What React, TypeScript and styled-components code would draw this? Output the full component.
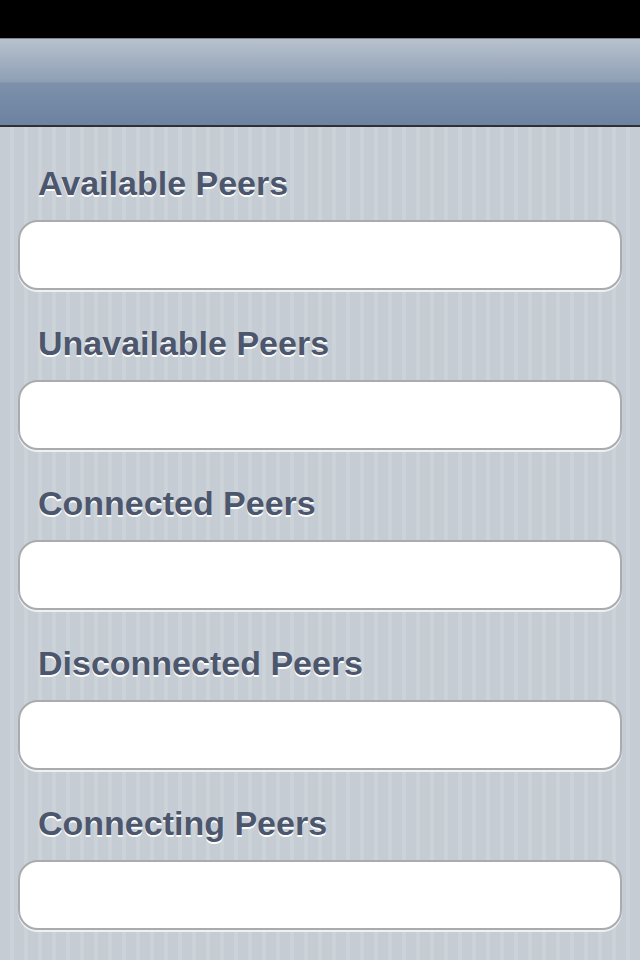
import React from 'react';
import styled, { createGlobalStyle } from 'styled-components';

const sections = [
  'Available Peers',
  'Unavailable Peers',
  'Connected Peers',
  'Disconnected Peers',
  'Connecting Peers',
];

const App = () => {
  return (
    <>
      <GlobalStyle />
      <Screen>
        <StatusBar />
        <NavBar />
        <TableArea>
          {sections.map((title) => (
            <Section key={title}>
              <SectionTitle>{title}</SectionTitle>
              <GroupCell />
            </Section>
          ))}
        </TableArea>
      </Screen>
    </>
  );
};

export default App;

// Styled Components
const GlobalStyle = createGlobalStyle`
  html, body {
    margin: 0;
    padding: 0;
    background: #000;
  }
  body {
    font-family: "Liberation Sans", Arial, Helvetica, sans-serif;
  }
`;

const Screen = styled.div`
  width: 640px;
  height: 960px;
  display: flex;
  flex-direction: column;
  overflow: hidden;
`;

const StatusBar = styled.div`
  height: 38px;
  flex-shrink: 0;
  background: #000;
`;

const NavBar = styled.div`
  height: 86px;
  flex-shrink: 0;
  border-top: 1px solid #80868d;
  border-bottom: 2px solid #2d3034;
  background: linear-gradient(
    to bottom,
    #b8c2cd 0%,
    #a8b5c4 18%,
    #8e9fb5 50%,
    #7d90ab 51%,
    #6c83a1 100%
  );
`;

const TableArea = styled.div`
  flex: 1;
  padding: 3px 18px 0;
  background-color: #c5ccd4;
  background-image: repeating-linear-gradient(
    to right,
    #c5ccd4 0px,
    #c5ccd4 10px,
    #cbd2d8 10px,
    #cbd2d8 14px
  );
  display: flex;
  flex-direction: column;
`;

const Section = styled.div`
  display: flex;
  flex-direction: column;
  flex-shrink: 0;
  height: 160px;
`;

const SectionTitle = styled.h2`
  margin: 0;
  padding: 33px 0 0 20px;
  height: 90px;
  box-sizing: border-box;
  font-size: 34px;
  line-height: 40px;
  font-weight: bold;
  color: #4c566c;
  text-shadow: 0 2px 0 #ffffff;
  white-space: nowrap;
`;

const GroupCell = styled.div`
  height: 70px;
  box-sizing: border-box;
  background: #fff;
  border: 2px solid #aaabad;
  border-radius: 20px;
  box-shadow: 0 2px 0 #eef1f4;
`;
